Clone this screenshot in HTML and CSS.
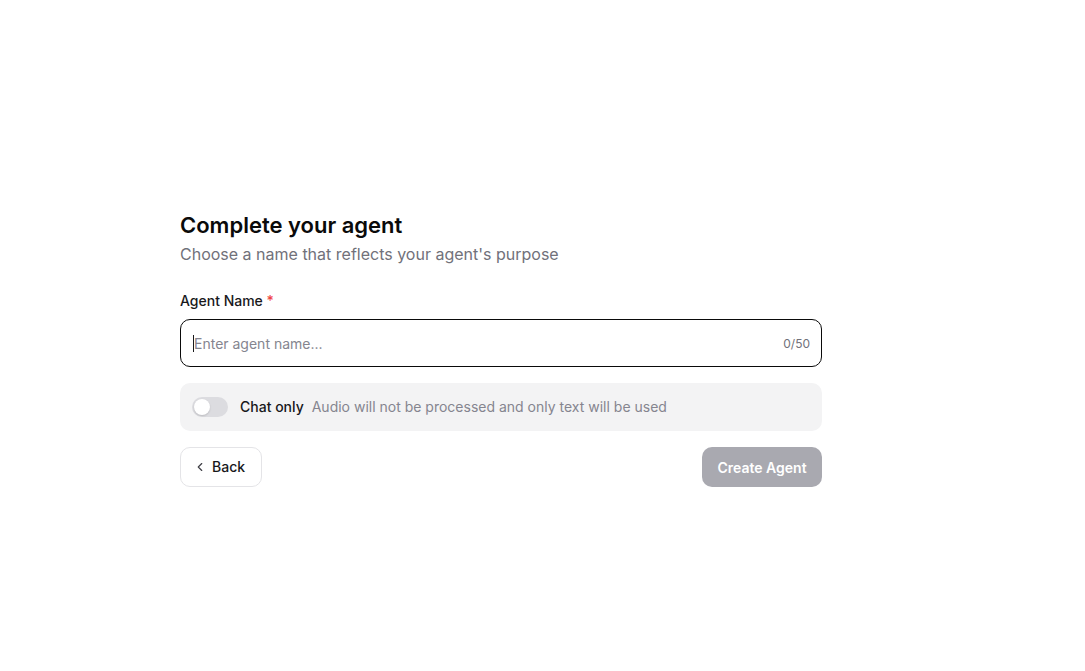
FILE: index.html
```html
<!DOCTYPE html>
<html>
<head>
<meta charset="utf-8">
<link rel="stylesheet" href="styles.css">
</head>
<body>
<main class="page">
  <section class="card">
    <h1 class="title">Complete your agent</h1>
    <p class="subtitle">Choose a name that reflects your agent's purpose</p>
    <label class="label" for="name">Agent Name <span class="req">*</span></label>
    <div class="input-wrap">
      <span class="caret"></span>
      <input id="name" class="input" type="text" placeholder="Enter agent name...">
      <span class="count">0/50</span>
    </div>
    <div class="toggle-row">
      <span class="switch"><span class="knob"></span></span>
      <span class="toggle-title">Chat only</span>
      <span class="toggle-desc">Audio will not be processed and only text will be used</span>
    </div>
    <div class="actions">
      <button class="btn-back">
        <svg width="14" height="14" viewBox="0 0 24 24" fill="none" stroke="#3f3f46" stroke-width="2" stroke-linecap="round" stroke-linejoin="round"><path d="M15 18l-6-6 6-6"/></svg>
        <span>Back</span>
      </button>
      <button class="btn-create">Create Agent</button>
    </div>
  </section>
</main>
</body>
</html>
```

FILE: styles.css
```css
* { box-sizing: border-box; }
html, body { margin: 0; padding: 0; background: #fff; }
body { font-family: Inter, "Noto Sans", sans-serif; color: #09090b; }
.page { padding: 211px 0 0 180px; }
.card { width: 642px; display: flex; flex-direction: column; }
.title { margin: 0; font-size: 22px; font-weight: 600; line-height: 28px; letter-spacing: 0; color: #0a0a0a; }
.subtitle { margin: 3px 0 0; font-size: 16px; line-height: 24px; color: #71717a; letter-spacing: 0; }
.label { margin-top: 25px; font-size: 14px; font-weight: 500; line-height: 20px; color: #18181b; }
.req { color: #ef4444; }
.input-wrap { margin-top: 8px; height: 48px; border: 1.6px solid #0a0a0a; border-radius: 10px; display: flex; align-items: center; padding: 0 11px 0 12px; position: relative; }
.caret { width: 1px; height: 17px; background: #18181b; }
.input { flex: 1; border: none; outline: none; font-family: inherit; font-size: 14px; color: #18181b; padding: 0; background: transparent; }
.input::placeholder { color: #85858f; }
.count { font-size: 12px; color: #71717a; }
.toggle-row { margin-top: 16px; height: 48px; background: #f3f3f4; border-radius: 10px; display: flex; align-items: center; padding: 0 12px 1px; gap: 12px; }
.switch { width: 36px; height: 20px; background: #dcdce0; border-radius: 10px; position: relative; flex: none; }
.knob { position: absolute; left: 2px; top: 2px; width: 16px; height: 16px; background: #fff; border-radius: 50%; box-shadow: 0 1px 2px rgba(0,0,0,0.15); }
.toggle-title { font-size: 14px; font-weight: 500; color: #18181b; }
.toggle-desc { font-size: 14px; color: #85858f; margin-left: -4px; }
.actions { margin-top: 16px; display: flex; justify-content: space-between; }
.btn-back { height: 40px; width: 82px; border: 1px solid #e4e4e7; background: #fff; border-radius: 10px; display: flex; align-items: center; gap: 5px; padding: 0 0 1px 12px; font-family: inherit; font-size: 14px; font-weight: 500; color: #18181b; }
.btn-create { height: 40px; width: 120px; border: none; background: #a9a9b0; border-radius: 10px; color: #fff; font-family: inherit; font-size: 14px; font-weight: 600; padding-bottom: 1px; }
```
